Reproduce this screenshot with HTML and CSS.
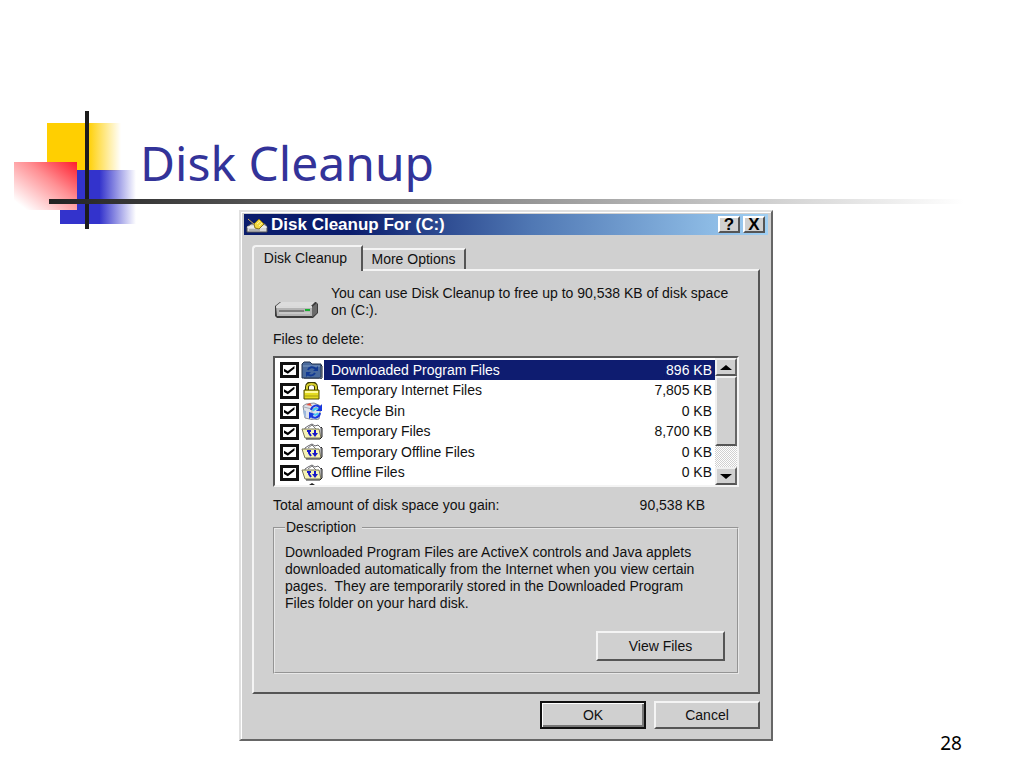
FILE: index.html
```html
<!DOCTYPE html>
<html lang="en">
<head>
    <meta charset="UTF-8">
    <meta name="viewport" content="width=device-width, initial-scale=1.0">
    <title>Disk Cleanup</title>
    <link rel="stylesheet" href="styles.css">
</head>
<body>
    <!-- Shared icons -->
    <svg class="sprites" aria-hidden="true">
        <symbol id="icon-folder" viewBox="0 0 22 18">
            <path d="M1 3l2-2h6l2 2h9v13l-2 1H1z" fill="#4a6a9c" stroke="#22324e"/>
            <path d="M2 5h17" stroke="#7d9ac4"/>
            <path d="M20 4l1 1v12l-2 1H3" fill="none" stroke="#0c1830"/>
            <path d="M7 9c1-3 5-4 8-1M14 12c-2 3-5 3-8 1" fill="none" stroke="#123a94" stroke-width="2"/>
            <path d="M17 5v5h-5zM5 16v-5h5z" fill="#123a94"/>
        </symbol>
        <symbol id="icon-lock" viewBox="0 0 22 18">
            <path d="M6 9V5c0-5 9-5 9 0v4" fill="none" stroke="#3c3a00" stroke-width="4"/>
            <path d="M6 9V5c0-4 9-4 9 0v4" fill="none" stroke="#d8d030" stroke-width="2"/>
            <path d="M3 8h15v9H3z" fill="#e4dc20" stroke="#4a4600"/>
            <path d="M4 14h13" stroke="#a89c10"/>
            <path d="M4 10h13" stroke="#fffb9a" stroke-width="2"/>
        </symbol>
        <symbol id="icon-bin" viewBox="0 0 22 18">
            <path d="M2 4l3-2 8-1 7 3-2 13-5 1-9-2z" fill="#dfe3ea" stroke="#8a8e98"/>
            <path d="M3 5l8 2 8-3M11 7v10" fill="none" stroke="#a4a9b4"/>
            <path d="M5 3l4-2 2 3z" fill="#e2503c"/>
            <path d="M2 8l3 1v6l-2-1z" fill="#9cb7dc"/>
            <path d="M10 8c1-5 7-6 9-2M19 11c-1 5-6 6-9 3" fill="none" stroke="#1838e0" stroke-width="2"/>
            <path d="M21 2v7h-6zM8 17v-7l6 2z" fill="#1838e0"/>
            <path d="M12 9c1-2 3-3 5-2M17 11c-1 2-3 2-4 1" fill="none" stroke="#40c8f0" stroke-width="2"/>
        </symbol>
        <symbol id="icon-temp" viewBox="0 0 22 18">
            <path d="M4 5l3-2 4-2 3 2 3-1 3 3v9H4z" fill="#fff" stroke="#66666c"/>
            <path d="M7 5l4-3 4 4" fill="none" stroke="#777"/>
            <path d="M1 6h17l2 9H4z" fill="#f6f2b4" stroke="#77745a"/>
            <path d="M20 4l1 1v9l-2 2H5" fill="none" stroke="#222"/>
            <path d="M6 8h4M8 8v2l2 3M14 7v4" fill="none" stroke="#1818c8" stroke-width="2"/>
            <path d="M11 10h6l-3 4z" fill="#1818c8"/>
        </symbol>
        <symbol id="icon-tip" viewBox="0 0 22 18">
            <path d="M9 2l3-2 3 2z" fill="#222"/>
        </symbol>
    </svg>

    <header class="slide-header">
        <svg class="ornament" width="126" height="118" viewBox="0 0 126 118" aria-hidden="true">
            <defs>
                <linearGradient id="yellow">
                    <stop offset="0.55" stop-color="#ffcf01"/>
                    <stop offset="1" stop-color="#ffcf01" stop-opacity="0"/>
                </linearGradient>
                <linearGradient id="blue">
                    <stop offset="0.52" stop-color="#3333cc"/>
                    <stop offset="1" stop-color="#3333cc" stop-opacity="0"/>
                </linearGradient>
                <linearGradient id="redwhite" x1="1" y1="0" x2="0.1" y2="0.9">
                    <stop offset="0" stop-color="#ff1c2c"/>
                    <stop offset="0.45" stop-color="#ff9094"/>
                    <stop offset="1" stop-color="#fff"/>
                </linearGradient>
            </defs>
            <rect x="33" y="12" width="74" height="48" fill="url(#yellow)"/>
            <rect x="46" y="59" width="76" height="54" fill="url(#blue)"/>
            <rect x="0" y="51" width="63" height="48" fill="url(#redwhite)"/>
            <rect x="71" y="0" width="4" height="118" fill="#1c1c1c"/>
        </svg>
        <h1>Disk Cleanup</h1>
    </header>

    <main class="slide-body">
        <section class="dialog" aria-label="Disk Cleanup For (C:)">
            <div class="titlebar">
                <svg class="title-icon" width="22" height="18" viewBox="0 0 22 18" aria-hidden="true">
                    <path d="M1 11l4-3h14l2 3v5H1z" fill="#d8d8d8" stroke="#555"/>
                    <path d="M1 11h20" stroke="#fff"/>
                    <path d="M2 3l7 6" stroke="#d8b060"/>
                    <path d="M8 8l5-5 5 5-5 5-4-1z" fill="#f4d840" stroke="#85701a"/>
                    <path d="M11 8l3-3M13 10l3-3" stroke="#fff6a0"/>
                    <path d="M3 14h11" stroke="#888"/>
                </svg>
                <h2>Disk Cleanup For (C:)</h2>
                <button class="win-btn" type="button" aria-label="Help">?</button>
                <button class="win-btn" type="button" aria-label="Close">X</button>
            </div>

            <div class="tabs" role="tablist">
                <button class="tab active" type="button" role="tab" aria-selected="true">Disk Cleanup</button>
                <button class="tab" type="button" role="tab" aria-selected="false">More Options</button>
            </div>

            <div class="panel" role="tabpanel">
                <div class="intro">
                    <svg width="44" height="18" viewBox="0 0 44 18" aria-hidden="true">
                        <path d="M0 5l5-4h36l2 2v9l-5 5H2l-2-2z" fill="#3c3c3c"/>
                        <path d="M1 5l5-4h34l-4 4z" fill="#dcdcdc"/>
                        <path d="M1 5h36v10H2z" fill="#b4b4b4"/>
                        <path d="M1 6h36" stroke="#fff"/>
                        <path d="M4 10h25" stroke="#7c7c7c" stroke-width="2"/>
                        <path d="M4 12h31" stroke="#dadada"/>
                        <path d="M37 6l5-4v10l-5 4z" fill="#6a6a6a"/>
                        <path d="M30 8h5v2h-5z" fill="#18b030"/>
                    </svg>
                    <p>You can use Disk Cleanup to free up to 90,538 KB of disk space on (C:).</p>
                </div>

                <p class="list-label" id="files-label">Files to delete:</p>
                <div class="file-list">
                    <table aria-labelledby="files-label">
                        <tbody>
                            <tr class="selected">
                                <td class="check"><input type="checkbox" id="f1" checked></td>
                                <td class="icon"><svg><use href="#icon-folder"/></svg></td>
                                <td class="name"><label for="f1">Downloaded Program Files</label></td>
                                <td class="size">896 KB</td>
                            </tr>
                            <tr>
                                <td class="check"><input type="checkbox" id="f2" checked></td>
                                <td class="icon"><svg><use href="#icon-lock"/></svg></td>
                                <td class="name"><label for="f2">Temporary Internet Files</label></td>
                                <td class="size">7,805 KB</td>
                            </tr>
                            <tr>
                                <td class="check"><input type="checkbox" id="f3" checked></td>
                                <td class="icon"><svg><use href="#icon-bin"/></svg></td>
                                <td class="name"><label for="f3">Recycle Bin</label></td>
                                <td class="size">0 KB</td>
                            </tr>
                            <tr>
                                <td class="check"><input type="checkbox" id="f4" checked></td>
                                <td class="icon"><svg><use href="#icon-temp"/></svg></td>
                                <td class="name"><label for="f4">Temporary Files</label></td>
                                <td class="size">8,700 KB</td>
                            </tr>
                            <tr>
                                <td class="check"><input type="checkbox" id="f5" checked></td>
                                <td class="icon"><svg><use href="#icon-temp"/></svg></td>
                                <td class="name"><label for="f5">Temporary Offline Files</label></td>
                                <td class="size">0 KB</td>
                            </tr>
                            <tr>
                                <td class="check"><input type="checkbox" id="f6" checked></td>
                                <td class="icon"><svg><use href="#icon-temp"/></svg></td>
                                <td class="name"><label for="f6">Offline Files</label></td>
                                <td class="size">0 KB</td>
                            </tr>
                        </tbody>
                    </table>
                    <svg class="next-icon" aria-hidden="true"><use href="#icon-tip"/></svg>
                    <div class="scrollbar">
                        <button type="button" aria-label="Scroll up"><svg width="12" height="5" viewBox="0 0 12 5"><path d="M0 5l6-5 6 5z"/></svg></button>
                        <div class="thumb"></div>
                        <button type="button" class="down" aria-label="Scroll down"><svg width="12" height="5" viewBox="0 0 12 5"><path d="M0 0l6 5 6-5z"/></svg></button>
                    </div>
                </div>

                <div class="total">
                    <span>Total amount of disk space you gain:</span>
                    <span>90,538 KB</span>
                </div>

                <fieldset class="description">
                    <legend>Description</legend>
                    <p>Downloaded Program Files are ActiveX controls and Java applets downloaded automatically from the Internet when you view certain pages.&nbsp; They are temporarily stored in the Downloaded Program Files folder on your hard disk.</p>
                    <button class="btn view" type="button">View Files</button>
                </fieldset>
            </div>

            <div class="actions">
                <button class="btn default" type="button">OK</button>
                <button class="btn" type="button">Cancel</button>
            </div>
        </section>
        <span class="page-number">28</span>
    </main>
</body>
</html>
```
FILE: styles.css
```css
* {
    box-sizing: border-box;
}
body {
    margin: 0;
    background-color: #fff;
    color: #111;
    font-family: "Liberation Sans", Arial, sans-serif;
    font-size: 14px;
    line-height: 17px;
}
h1, h2, p {
    margin: 0;
}
button {
    font: inherit;
    color: inherit;
    padding: 0;
}
.sprites {
    position: absolute;
    width: 0;
    height: 0;
}

/* Slide heading */
.slide-header {
    position: relative;
    display: flex;
    height: 210px;
    padding: 111px 0 0 14px;
}
.slide-header::after {
    content: "";
    position: absolute;
    left: 49px;
    right: 60px;
    top: 199px;
    height: 5px;
    background: linear-gradient(to right, #222, #fff);
}
.ornament {
    flex: none;
}
.slide-header h1 {
    padding-top: 20px;
    color: #333399;
    font-family: "Noto Sans", "Open Sans", sans-serif;
    font-size: 48px;
    font-weight: 400;
    line-height: 64px;
}
.slide-body {
    display: grid;
    grid-template-columns: 1fr minmax(0, 534px) 1fr;
    padding-right: 12px;
}
.page-number {
    align-self: end;
    justify-self: end;
    padding-right: 50px;
    color: #000;
    font-family: "Noto Sans", "Open Sans", sans-serif;
    font-size: 19px;
    line-height: 26px;
}

/* Dialog window */
.dialog {
    grid-column: 2;
    margin-bottom: 15px;
    padding: 2px 3px 10px;
    background-color: #d0d0d0;
    border: 2px solid;
    border-color: #e0e0e0 #666 #666 #e0e0e0;
    box-shadow: inset 1px 1px #fff;
}
.titlebar {
    display: flex;
    align-items: center;
    gap: 3px;
    height: 21px;
    padding: 0 3px 0 2px;
    background: linear-gradient(to right, #0a1c6c 20%, #5078b4 55%, #a0d0f4);
}
.titlebar h2 {
    flex: 1;
    color: #fff;
    font-size: 17px;
    line-height: 20px;
}
.win-btn {
    width: 22px;
    height: 17px;
    background-color: #d0d0d0;
    border: 2px solid;
    border-color: #fff #555 #555 #fff;
    color: #000;
    font-size: 17px;
    font-weight: bold;
    line-height: 13px;
}
.tabs {
    display: flex;
    align-items: flex-end;
    margin: 10px 8px 0;
}
.tab {
    width: 103px;
    height: 21px;
    background-color: #d0d0d0;
    border: 2px solid;
    border-color: #f4f4f4 #555 transparent #f4f4f4;
    border-bottom: none;
    border-left: none;
}
.tab.active {
    position: relative;
    width: 111px;
    height: 26px;
    margin-bottom: -2px;
    padding: 0 4px 2px 0;
    border-left: 2px solid #f4f4f4;
    border-radius: 4px 0 0 0;
}
.panel {
    margin: 0 8px;
    padding: 14px 19px 18px;
    border: 2px solid;
    border-color: #f4f4f4 #555 #555 #f4f4f4;
}
.intro {
    display: flex;
    align-items: flex-end;
    gap: 12px;
    padding-left: 2px;
}
.intro svg {
    flex: none;
}
.list-label {
    margin: 12px 0 8px;
}

/* File list */
.file-list {
    position: relative;
    display: flex;
    align-items: flex-start;
    height: 131px;
    overflow: hidden;
    background-color: #fff;
    border: 2px solid;
    border-color: #555 #f4f4f4 #f4f4f4 #555;
}
.file-list table {
    flex: 1;
    margin-top: 2px;
    border-collapse: collapse;
}
.file-list tr {
    height: 20px;
}
.file-list tr:nth-child(even) {
    height: 21px;
}
.file-list td {
    padding: 0;
}
.file-list .check {
    width: 25px;
    padding-left: 5px;
}
.file-list .icon {
    width: 24px;
    padding-left: 1px;
}
.file-list .icon svg,
.next-icon {
    display: block;
    width: 22px;
    height: 18px;
}
.next-icon {
    position: absolute;
    left: 25px;
    top: 125px;
}
.file-list .name {
    padding-left: 7px;
}
.file-list .size {
    padding-right: 3px;
    text-align: right;
}
.selected .name,
.selected .size {
    background-color: #0e1c70;
    color: #fff;
}
.check input {
    appearance: none;
    display: block;
    width: 19px;
    height: 16px;
    margin: 0;
    background-color: #fff;
    border: 3px solid #111;
}
.check input:checked::before {
    content: "";
    display: block;
    width: 11px;
    height: 8px;
    margin: 1px;
    background-color: #000;
    clip-path: polygon(0 35%, 35% 62%, 95% 0, 95% 32%, 35% 96%, 0 68%);
}
.scrollbar {
    display: flex;
    flex-direction: column;
    width: 22px;
    height: 127px;
    background: repeating-conic-gradient(#d0d0d0 0 25%, #fff 0 50%) 0 0 / 2px 2px;
}
.scrollbar button,
.thumb {
    background-color: #d0d0d0;
    border: 2px solid;
    border-color: #f0f0f0 #666 #555 #f0f0f0;
}
.scrollbar button {
    display: flex;
    align-items: center;
    justify-content: center;
    height: 18px;
}
.thumb {
    height: 70px;
}
.scrollbar .down {
    margin-top: auto;
}
.total {
    display: flex;
    justify-content: space-between;
    margin-top: 10px;
    padding-right: 34px;
}

/* Description box */
.description {
    min-width: 0;
    height: 155px;
    margin: 5px 0 0;
    padding: 8px 12px 11px 10px;
    border: 2px groove #e8e8e8;
    display: flex;
    flex-direction: column;
}
.description legend {
    padding: 0 6px 0 1px;
}
.description p {
    padding-right: 16px;
}
.btn {
    width: 106px;
    height: 28px;
    background-color: #d0d0d0;
    border: 2px solid;
    border-color: #f4f4f4 #555 #555 #f4f4f4;
}
.btn.view {
    width: 129px;
    height: 30px;
    margin-top: auto;
    margin-left: auto;
}
.btn.default {
    border-color: #111;
    box-shadow: inset 1px 1px #fff, inset -2px -2px #777;
}
.actions {
    display: flex;
    justify-content: flex-end;
    gap: 8px;
    margin: 7px 8px 0;
}
```
